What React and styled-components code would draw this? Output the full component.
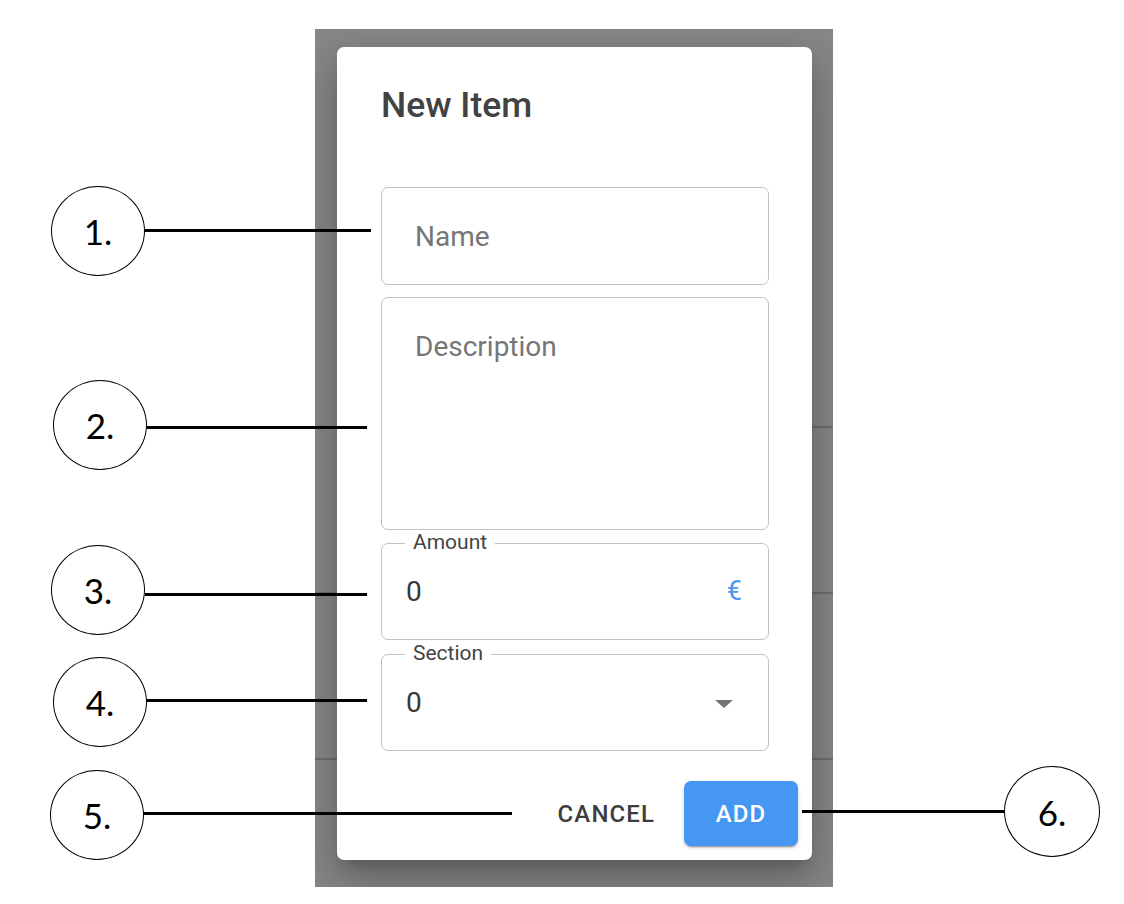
import React from 'react';
import styled, { createGlobalStyle } from 'styled-components';

const GlobalStyle = createGlobalStyle`
    html, body {
        margin: 0;
        padding: 0;
        background: #fff;
    }
    body {
        font-family: Roboto, "Liberation Sans", sans-serif;
    }
`;

const callouts = [
    { n: '1.', x: 51, y: 186, lx: 145, lw: 226, ly: 229 },
    { n: '2.', x: 53, y: 380, lx: 147, lw: 220, ly: 426 },
    { n: '3.', x: 51, y: 545, lx: 145, lw: 222, ly: 593 },
    { n: '4.', x: 53, y: 657, lx: 147, lw: 220, ly: 699 },
    { n: '5.', x: 50, y: 770, lx: 143, lw: 369, ly: 812 },
    { n: '6.', x: 1004, y: 766, lx: 802, lw: 202, ly: 810 },
];

const App = () => {
    return (
        <Page>
            <GlobalStyle />
            <Backdrop>
                <Dialog>
                    <Title>New Item</Title>

                    <Form>
                        <Field $height={98}>
                            <Placeholder>Name</Placeholder>
                        </Field>
                        <Field $height={233}>
                            <Placeholder>Description</Placeholder>
                        </Field>
                        <Field $height={97} $labelled>
                            <Label>Amount</Label>
                            <Value>0</Value>
                            <Euro>€</Euro>
                        </Field>
                        <Field $height={97} $labelled>
                            <Label>Section</Label>
                            <Value>0</Value>
                            <Caret />
                        </Field>
                    </Form>

                    <Actions>
                        <TextButton>Cancel</TextButton>
                        <PrimaryButton>Add</PrimaryButton>
                    </Actions>
                </Dialog>
            </Backdrop>

            {callouts.map((c) => (
                <React.Fragment key={c.n}>
                    <Leader $x={c.lx} $y={c.ly} $w={c.lw} />
                    <Bubble $x={c.x} $y={c.y} $wide={c.n === '6.'}>{c.n}</Bubble>
                </React.Fragment>
            ))}
        </Page>
    )
}

export default App

const Page = styled.div`
    position: relative;
    width: 1124px;
    height: 904px;
    padding-top: 29px;
    box-sizing: border-box;
    overflow: hidden;
`;

const Backdrop = styled.div`
    margin-left: 315px;
    width: 518px;
    height: 858px;
    overflow: hidden;
    padding: 18px 21px 0 22px;
    box-sizing: border-box;
    background:
        linear-gradient(#6f6f6f, #6f6f6f) 0 397px / 100% 2px no-repeat,
        linear-gradient(#6f6f6f, #6f6f6f) 0 563px / 100% 2px no-repeat,
        linear-gradient(#6f6f6f, #6f6f6f) 0 729px / 100% 2px no-repeat,
        #888;
`;

const Dialog = styled.div`
    display: flex;
    flex-direction: column;
    height: 813px;
    padding: 37px 14px 14px 44px;
    box-sizing: border-box;
    background: #fff;
    border-radius: 7px;
    box-shadow: 0 11px 15px -7px rgba(0, 0, 0, 0.2),
        0 24px 38px 3px rgba(0, 0, 0, 0.14),
        0 9px 46px 8px rgba(0, 0, 0, 0.12);
`;

const Title = styled.h2`
    margin: 0;
    font-size: 35.5px;
    line-height: 42px;
    font-weight: 500;
    color: #424242;
`;

const Form = styled.div`
    display: flex;
    flex-direction: column;
    gap: 12px;
    margin-top: 61px;
    margin-right: 29px;

    & > :nth-child(3) { margin-top: 1px; }
    & > :nth-child(4) { margin-top: 2px; }
`;

const Field = styled.div`
    position: relative;
    display: flex;
    align-items: ${(p) => (p.$labelled ? 'center' : 'flex-start')};
    height: ${(p) => p.$height}px;
    padding: ${(p) => (p.$labelled ? '0 26px 0 24px' : '32px 33px')};
    box-sizing: border-box;
    border: 1.5px solid #c2c2c2;
    border-radius: 7px;
`;

const Placeholder = styled.span`
    font-size: 28px;
    line-height: 33px;
    color: #767676;
`;

const Label = styled.span`
    position: absolute;
    top: -14px;
    left: 23px;
    padding: 0 8px;
    background: #fff;
    font-size: 21px;
    line-height: 25px;
    color: #444;
`;

const Value = styled.span`
    flex: 1;
    font-size: 28px;
    line-height: 33px;
    color: #383838;
`;

const Euro = styled.span`
    font-size: 27px;
    line-height: 33px;
    color: #4a97ef;
`;

const Caret = styled.span`
    width: 0;
    height: 0;
    margin-right: 9px;
    margin-top: 2px;
    border-left: 9.5px solid transparent;
    border-right: 9.5px solid transparent;
    border-top: 8px solid #757575;
`;

const Actions = styled.div`
    display: flex;
    align-items: center;
    justify-content: flex-end;
    gap: 14px;
    margin-top: auto;
`;

const TextButton = styled.button`
    border: none;
    background: transparent;
    padding: 0 15px;
    height: 65px;
    font-family: Roboto, "Liberation Sans", sans-serif;
    font-size: 24px;
    font-weight: 500;
    letter-spacing: 1.1px;
    text-transform: uppercase;
    color: #3d3d3d;
    cursor: pointer;
`;

const PrimaryButton = styled.button`
    border: none;
    width: 114px;
    height: 65px;
    border-radius: 7px;
    background: #4597f3;
    font-family: Roboto, "Liberation Sans", sans-serif;
    font-size: 24px;
    font-weight: 500;
    letter-spacing: 1.1px;
    text-transform: uppercase;
    color: #fff;
    cursor: pointer;
    box-shadow: 0 3px 1px -2px rgba(0, 0, 0, 0.2),
        0 2px 2px 0 rgba(0, 0, 0, 0.14),
        0 1px 5px 0 rgba(0, 0, 0, 0.12);
`;

/* annotation layer: circles and leader lines drawn over the screenshot */
const Bubble = styled.div`
    position: absolute;
    left: ${(p) => p.$x}px;
    top: ${(p) => p.$y}px;
    width: ${(p) => (p.$wide ? 96 : 94)}px;
    height: ${(p) => (p.$wide ? 91 : 90)}px;
    box-sizing: border-box;
    border: 1.5px solid #000;
    border-radius: 50%;
    background: #fff;
    display: flex;
    align-items: center;
    justify-content: center;
    font-family: Lato, "Open Sans", sans-serif;
    font-size: 35px;
    color: #000;
`;

const Leader = styled.div`
    position: absolute;
    left: ${(p) => p.$x}px;
    top: ${(p) => p.$y}px;
    width: ${(p) => p.$w}px;
    height: 3px;
    background: #000;
`;
